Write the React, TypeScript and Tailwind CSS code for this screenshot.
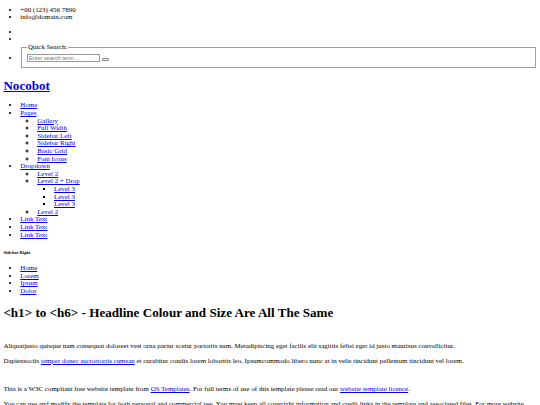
import React from "react";

const link = "text-[#0000ee] underline";
const ul = "my-[6.75px] list-disc pl-[16.875px]";
const sub = "list-[circle] pl-[16.875px]";
const sub3 = "list-[square] pl-[16.875px]";

// broken <img alt=""> in the original leaves an empty line box
function ImgGap() {
  return <div className="h-[7.6px]" />;
}

export default function App() {
  return (
    <div className="px-[3.375px] pb-[3.375px] font-['Liberation_Serif',serif] text-[6.95px] leading-[7.6px] text-black bg-white">
      {/* top bar */}
      <ul className={ul}>
        <li>+00 (123) 456 7890</li>
        <li>info@domain.com</li>
      </ul>
      <ul className={ul}>
        <li className="h-[7.6px]" />
        <li className="h-[7.6px]" />
        <li>
          <form onSubmit={(e) => e.preventDefault()}>
            <fieldset className="mx-[0.84px] border-[0.84px] border-[#a0a0a0] px-[5.06px] pt-[2.36px] pb-[4.6px]">
              <legend className="px-[0.84px]">Quick Search:</legend>
              <input
                type="text"
                placeholder="Enter search term…"
                className="w-[73px] h-[8px] border-[0.84px] border-[#9a9a9a] px-[0.84px] align-baseline font-['Liberation_Sans',sans-serif] text-[5.63px] leading-[6px] placeholder:text-[#757575] outline-none"
              />
              <button
                type="submit"
                className="ml-[1.6px] w-[7px] h-[3px] rounded-[1px] border-[0.5px] border-[#8a8a8a] bg-[#efefef] align-baseline"
              />
            </fieldset>
          </form>
        </li>
      </ul>

      {/* header */}
      <h1 className="my-[9.6px] text-[13.1px] leading-[15.2px] font-bold">
        <a href="#" className={link}>
          Nocobot
        </a>
      </h1>
      <nav>
        <ul className={ul}>
          <li><a href="#" className={link}>Home</a></li>
          <li>
            <a href="#" className={link}>Pages</a>
            <ul className={sub}>
              <li><a href="#" className={link}>Gallery</a></li>
              <li><a href="#" className={link}>Full Width</a></li>
              <li><a href="#" className={link}>Sidebar Left</a></li>
              <li><a href="#" className={link}>Sidebar Right</a></li>
              <li><a href="#" className={link}>Basic Grid</a></li>
              <li><a href="#" className={link}>Font Icons</a></li>
            </ul>
          </li>
          <li>
            <a href="#" className={link}>Dropdown</a>
            <ul className={sub}>
              <li><a href="#" className={link}>Level 2</a></li>
              <li>
                <a href="#" className={link}>Level 2 + Drop</a>
                <ul className={sub3}>
                  <li><a href="#" className={link}>Level 3</a></li>
                  <li><a href="#" className={link}>Level 3</a></li>
                  <li><a href="#" className={link}>Level 3</a></li>
                </ul>
              </li>
              <li><a href="#" className={link}>Level 2</a></li>
            </ul>
          </li>
          <li><a href="#" className={link}>Link Text</a></li>
          <li><a href="#" className={link}>Link Text</a></li>
          <li><a href="#" className={link}>Link Text</a></li>
        </ul>
      </nav>

      {/* breadcrumb */}
      <h6 className="my-[10.5px] text-[4.52px] leading-[5.1px] font-bold">Sidebar Right</h6>
      <nav>
        <ul className={ul}>
          <li><a href="#" className={link}>Home</a></li>
          <li><a href="#" className={link}>Lorem</a></li>
          <li><a href="#" className={link}>Ipsum</a></li>
          <li><a href="#" className={link}>Dolor</a></li>
        </ul>
      </nav>

      {/* content */}
      <h1 className="my-[9.05px] text-[13.1px] leading-[15.2px] font-bold">
        &lt;h1&gt; to &lt;h6&gt; - Headline Colour and Size Are All The Same
      </h1>
      <ImgGap />
      <p className="my-[6.75px]">
        Aliquatjusto quisque nam consequat doloreet vest orna partur scetur portortis nam. Metadipiscing eget
        facilis elit sagittis felisi eger id justo maurisus convallicitur.
      </p>
      <p className="my-[6.75px]">
        Dapiensociis <a href="#" className={link}>temper donec auctortortis cumsan</a> et curabitur condis lorem
        loborttis leo. Ipsumcommodo libero nunc at in velis tincidunt pellentum tincidunt vel lorem.
      </p>
      <ImgGap />
      <p className="my-[6.75px]">
        This is a W3C compliant free website template from <a href="#" className={link}>OS Templates</a>. For full
        terms of use of this template please read our <a href="#" className={link}>website template licence</a>.
      </p>
      <p className="my-[6.75px]">
        You can use and modify the template for both personal and commercial use. You must keep all copyright
        information and credit links in the template and associated files. For more website templates visit our{" "}
        <a href="#" className={link}>free website templates</a> section.
      </p>
    </div>
  );
}
